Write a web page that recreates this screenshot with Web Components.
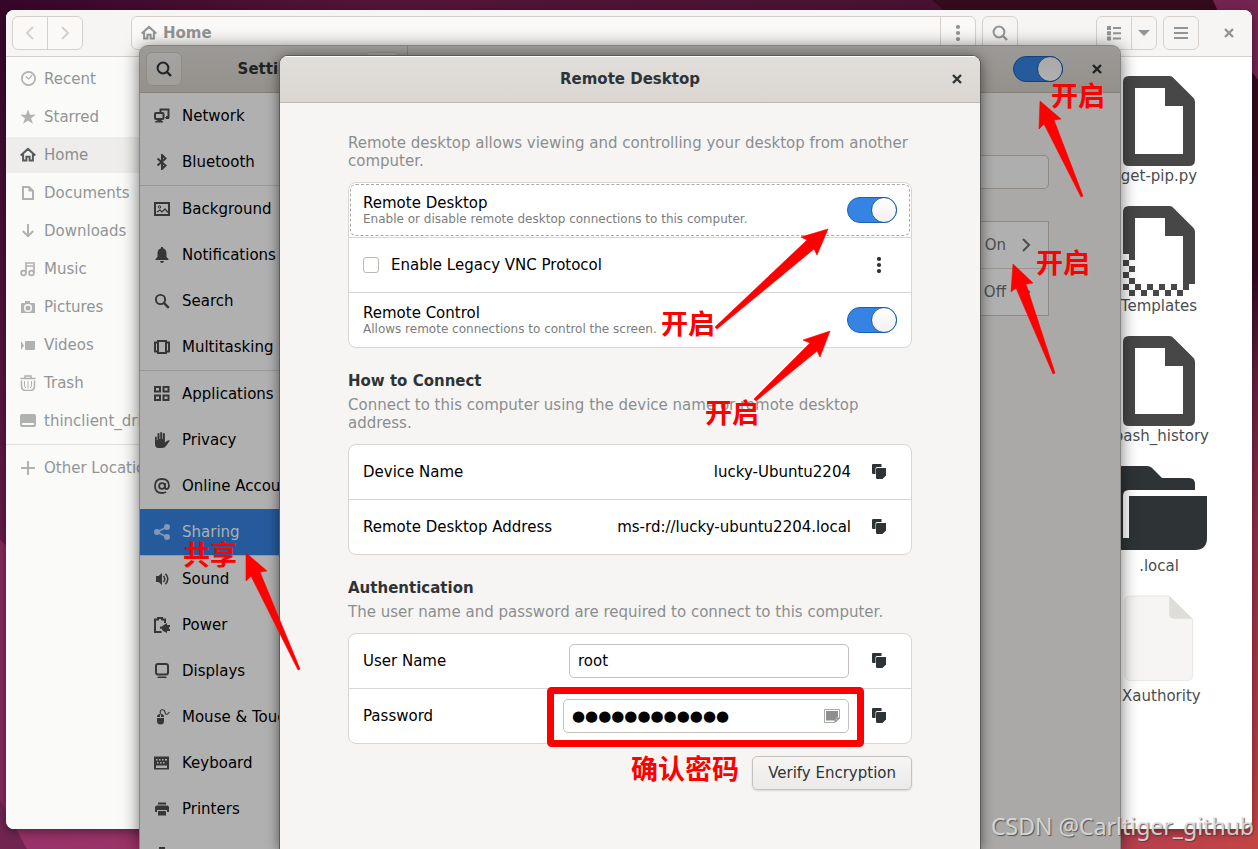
<!DOCTYPE html>
<html lang="en">
<head>
<meta charset="utf-8">
<title>Remote Desktop</title>
<style>
  html, body { margin: 0; height: 100%; }
  body { overflow: hidden; font: 15px/18px "DejaVu Sans", "Noto Sans CJK SC", sans-serif; color: #000; }
</style>
</head>
<body>
<desk-top></desk-top>
<script>
const ICONS = {
  back: '<path d="M11 2 5 8l6 6" fill="none" stroke="currentColor" stroke-width="2"/>',
  next: '<path d="m5 2 6 6-6 6" fill="none" stroke="currentColor" stroke-width="2"/>',
  home: '<path d="M.7 8.6 8 1.9l7.3 6.7M3.1 7v6.6h3.3V9.8h3.2v3.8h3.3V7" fill="none" stroke="currentColor" stroke-width="2"/>',
  search: '<circle cx="7" cy="7" r="5.4" fill="none" stroke="currentColor" stroke-width="2"/><path d="m11 11 4 4" stroke="currentColor" stroke-width="2.4"/>',
  find: '<circle cx="6.5" cy="6.5" r="4.6" fill="none" stroke="currentColor" stroke-width="1.9"/><path d="m9.8 9.8 5 5" stroke="currentColor" stroke-width="2.4"/>',
  dots: '<circle cx="8" cy="2" r="2.1"/><circle cx="8" cy="8" r="2.1"/><circle cx="8" cy="14" r="2.1"/>',
  list: '<path d="M1 1h4v4H1zM1 6.200h4v4H1zM1 11.400h4v4H1zM7 2h8v2H7zM7 7.200h8v2H7zM7 12.400h8v2H7z"/>',
  down: '<path d="M2 5h12l-6 6z"/>',
  menu: '<path d="M1 2h14v2H1zM1 7h14v2H1zM1 12h14v2H1z"/>',
  close: '<path d="m4 4 8 8m0-8-8 8" stroke="currentColor" stroke-width="2.4"/>',
  recent: '<circle cx="8.500" cy="7.500" r="6.600" fill="none" stroke="currentColor" stroke-width="1.700"/><path d="m6 5.500 2.700 2.500 3.500-4" fill="none" stroke="currentColor" stroke-width="1.200"/>',
  star: '<path d="m8 .3 1.900 5.400h5.800L11 9.200l1.900 5.600L8 11.500l-4.900 3.300L5 9.200.300 5.700h5.800z"/>',
  doc: '<path d="M3 2h6l4 4v8H3z" fill="none" stroke="currentColor" stroke-width="2"/><path d="M8.500 2v4.500H13"/>',
  arrow: '<path d="M8 1v12M2.800 8 8 13.200 13.200 8" fill="none" stroke="currentColor" stroke-width="2"/>',
  music: '<circle cx="3.500" cy="12" r="2.400" fill="none" stroke="currentColor" stroke-width="1.800"/><circle cx="11.500" cy="12" r="2.400" fill="none" stroke="currentColor" stroke-width="1.800"/><path d="M6 12V2h8v10M6 5h8" fill="none" stroke="currentColor" stroke-width="1.700"/>',
  camera: '<path fill-rule="evenodd" d="M5 2h5v2h4q1 0 1 1v9H1V5q0-1 1-1h3zm3 3a4 4 0 1 0 0 8 4 4 0 0 0 0-8zm0 1.500a2.500 2.500 0 1 1 0 5 2.500 2.500 0 0 1 0-5z"/><path fill-rule="evenodd" d="M8 5a4 4 0 1 0 0 8 4 4 0 0 0 0-8zm0 1.500a2.500 2.500 0 1 1 0 5 2.500 2.500 0 0 1 0-5z"/><circle cx="8" cy="9" r="3.300" fill="none" stroke="#fafaf9" stroke-width="1.400"/>',
  video: '<path d="M6 4h8q1 0 1 1v7q0 1-1 1H6q-1 0-1-1V5q0-1 1-1zM1 4l3 4.500L1 13z"/>',
  trash: '<path d="M.500 3.500h15M5 3V1h6v2M1.500 5.500v5q0 5 4 5h5q4 0 4-5v-5" fill="none" stroke="currentColor" stroke-width="1.500"/><path d="M4.500 6v4q0 2 1.500 3M8 6v7.500M11.500 6v4q0 2-1.500 3" fill="none" stroke="currentColor"/>',
  drive: '<path fill-rule="evenodd" d="M2 1h12q2 0 2 2v9q0 2-2 2H2q-2 0-2-2V3q0-2 2-2zm0 9v2h12v-2z"/>',
  plus: '<path d="M7 1h2v6h6v2H9v6H7V9H1V7h6z"/>',
  network: '<path d="M6.500 4V1.500h8V9H12" fill="none" stroke="currentColor" stroke-width="2"/><path d="M11 9h4v2h-3z"/><rect x="1" y="5" width="8.500" height="6" rx="1" fill="none" stroke="currentColor" stroke-width="2"/><path d="M4 11h3v1l2 1.500v1H1v-1L4 12z"/>',
  bluetooth: '<path d="m3.500 4.500 8 7L8 15V1l3.500 3.500-8 7" fill="none" stroke="currentColor" stroke-width="2"/>',
  background: '<rect x="1" y="2" width="14" height="12" fill="none" stroke="currentColor" stroke-width="2"/><circle cx="5.500" cy="6" r="1.200" fill="none" stroke="currentColor"/><path d="m3 11 3-2 2 2 3-3 3 3.500" fill="none" stroke="currentColor" stroke-width="1.200"/>',
  bell: '<path d="M7 0h2v1.200q3.500 1 3.500 5V10l2 2v1h-13v-1l2-2V6.200q0-4 3.500-5zM6 14h4q-.500 2-2 2t-2-2z"/>',
  multi: '<path d="M4 2h8v12H4zM3.500 3.500H1v9h2.500M12.500 3.500H15v9h-2.500" fill="none" stroke="currentColor" stroke-width="2"/>',
  apps: '<path d="M1 1h5v4.500H1zM9.500 1h5v4.500h-5zM1 9.500h5V14H1zM9.500 9.500h5V14h-5z" fill="none" stroke="currentColor" stroke-width="2"/>',
  hand: '<path d="M1 5.500q0-1 .900-1t.900 1V8h.700V2q0-1 1-1t1 1v5h.700V1q0-1 1-1t1 1v6h.700V2q0-1 1-1t1 1v8.500l2-1.500q1.500-1 3.100-.700l-3.600 5.200q-1.500 2.500-4.400 2.500H4.500Q1 16 1 12z"/>',
  at: '<circle cx="8" cy="8" r="2.900" fill="none" stroke="currentColor" stroke-width="1.800"/><path d="M11 5v4.500q0 1.500 1.700 1.500T15 8q0-7-7-7T1 8t7 7q2.500 0 4-1" fill="none" stroke="currentColor" stroke-width="1.800"/>',
  share: '<path d="M13 3 3 8l10 5" fill="none" stroke="currentColor" stroke-width="1.600"/><circle cx="3" cy="8" r="3"/><circle cx="13" cy="3" r="3"/><circle cx="13" cy="13" r="3"/>',
  sound: '<path d="M2 5h2.500L8 2v12l-3.500-3H2z"/><path d="M9.500 5q2.500 3 0 6M11.500 2.800q4.500 5.200 0 10.400" fill="none" stroke="currentColor" stroke-width="1.500"/>',
  power: '<path d="M7.500 15H1V2.500h3V1h4v1.500h3V6" fill="none" stroke="currentColor" stroke-width="2"/><path d="M10.500 7.500 13 6v2h3v2h-1v2h1v2h-3v2l-3-1.500L8 13v-1.200H6v-2.200h2z"/>',
  display: '<rect x="2" y="1" width="12" height="10.500" rx="2" fill="none" stroke="currentColor" stroke-width="2"/><path d="M4 13.500h8v.8l1 .2V15H3v-.5l1-.2z"/>',
  mouse: '<path d="M3 9h7v3q0 3.500-3.500 3.500T3 12zM3 8q0-3 3-3v3zM7 5q3 0 3 3H7z"/><path d="M6.500 5.500Q5.500 1 8 .800t3 2.400 2 2T15.500 3" fill="none" stroke="currentColor" stroke-width="1.100"/>',
  keyboard: '<path fill-rule="evenodd" d="M0 1.500h15v13H0zM2 4v1.500h1.500V4zm3 0v1.500h1.500V4zm3 0v1.500h1.500V4zm3 0v1.500h2V4zM3 7v1.500h1.500V7zm3 0v1.500h1.500V7zm3 0v1.500h1.500V7zM2 10.500V13h11v-2.500z"/>',
  printer: '<path d="M4 1.500h8v2H4zM3 4.500h10q2 0 2 2V11h-2V9H3v2H1V6.500q0-2 2-2zM4 10h8v4.500H4z"/>',
  media: '<path d="M5 0h6v4h2v12H3V4h2z"/>',
  copy: '<path d="M2 0h8.500v3H6Q4.500 3 4.500 4.500V10H2q-1 0-1-1V1q0-1 1-1z"/><path d="M6.200 4H15v7.500L11.500 15H6.200q-1.200 0-1.200-1.200V5.200Q5 4 6.200 4z"/>',
  note: '<path d="M.5 1.500h15V10l-4.500 4.500H.5z" fill="#fff" stroke="#a8a8a6"/><path d="M2 3h12v6.500l-2.500.5-.5 2.500H2z" fill="#8f8f8d"/><path d="m11 14 .5-3.500 4-.5z" fill="#ccc" stroke="#8a8a88"/>',
  filedoc: '<path fill-rule="evenodd" d="M3 .5h6.700q.500 0 .800.400L13.600 4q.400.300.400.800v9.700q0 1-1 1H3q-1 0-1-1v-13q0-1 1-1zm1 2v11h8v-8H9v-3z"/>',
  template: '<path d="M3 .5h6.700q.500 0 .800.400L13.600 4q.400.300.400.800v8.700h-1v1h-1v-9H9v-3H4v7H3v-1H2v-7q0-1 1-1zM2 9.500h1v1H2zM3 10.500h1v1H3zM2 11.500h1v1H2zM3 12.500h1v1H3zM2 13.500h1v1H2zM4 13.500h1v1H4zM6 13.500h1v1H6zM8 13.500h1v1H8zM10 13.500h1v1h-1zM3 14.500h1v1H3zM5 14.500h1v1H5zM7 14.500h1v1H7zM9 14.500h1v1H9zM11 14.500h1v1h-1z"/>',
  folder: '<path d="M2 .5h4q.500 0 .800.300L8.500 2.500H13q1 0 1 1v1H3q-1 0-1 1v7h1v-7h13v7q0 2-2 2H2q-2 0-2-2v-10q0-2 2-2z" fill="#2e3436"/>',
  blank: '<path d="M3.300.5h6.400l3.900 3.900v9.200q0 1-1 1H3.300q-1 0-1-1V1.500q0-1 1-1z" fill="#f6f5f4" stroke="#e4e4e2" stroke-width=".15"/><path d="M9.700.5l3.900 3.800h-3q-.900 0-.900-.900z" fill="#deddda"/>'
};

/* Base class: puts a style and a markup template into an open shadow root. */
class Part extends HTMLElement {
  constructor() {
    super();
    this.attachShadow({ mode: 'open' });
  }
  connectedCallback() {
    if (this.shadowRoot.firstChild) return;
    const t = document.createElement('template');
    t.innerHTML = `<style>*,*::before,*::after{box-sizing:border-box}${this.css()}</style>${this.html()}`;
    this.shadowRoot.append(t.content.cloneNode(true));
  }
  attr(name, fallback = '') { return this.getAttribute(name) ?? fallback; }
}
const define = (name, css, html) => customElements.define(name, class extends Part {
  css() { return css; }
  html() { return html(this); }
});

define('sym-icon', `
  :host { display: block; flex: none; width: var(--icon, 16px); height: var(--icon, 16px); }
  svg { display: block; width: 100%; height: 100%; fill: currentColor; }`,
  e => `<svg viewBox="0 0 16 16" aria-hidden="true">${ICONS[e.attr('name')]}</svg>`);

define('icon-button', `
  :host { display: flex; flex: none; width: 34px; height: 34px; }
  button { flex: 1; display: flex; align-items: center; justify-content: center; padding: 0;
    border: 0; background: none; color: inherit; }`,
  e => `<button type="button" aria-label="${e.attr('label')}"><sym-icon name="${e.attr('icon')}"></sym-icon></button>`);

define('toggle-switch', `
  :host { display: block; flex: none; --on: #3584e4; --edge: #1a5fb4; --knob: #fff; --knob2: #f2f0ef; }
  input { appearance: none; display: flex; justify-content: flex-end; width: 50px; height: 26px; margin: 0;
    border: 1px solid var(--edge); border-radius: 13px; background: var(--on); }
  input::before { content: ""; width: 26px; height: 26px; margin: -1px; border: 1px solid var(--edge);
    border-radius: 50%; background: linear-gradient(var(--knob), var(--knob2)); }
  :host([dim]) { --on: #255b9d; --edge: #12417c; --knob: #aaa9a8; --knob2: #b0b0b0; }`,
  e => `<input type="checkbox" role="switch" checked aria-label="${e.attr('label')}">`);

/* Files window */
define('place-item', `
  :host { display: block; height: 38px; padding: 1px 0; }
  a { display: flex; align-items: center; gap: 8px; height: 36px; padding-left: 14px; color: #929595;
    text-decoration: none; white-space: nowrap; }
  sym-icon { color: #b0b1b1; }
  :host([current]) a { background: #eeedec; color: #8b8e8f; }
  :host([current]) sym-icon { color: #565a5c; }`,
  e => `<a href="#"><sym-icon name="${e.attr('icon')}"></sym-icon><slot></slot></a>`);

define('file-item', `
  :host { display: flex; flex-direction: column; align-items: center; width: 140px; height: 130px; color: #474747; --icon: 96px; }
  span { margin-top: -2px; color: #4a4d4f; white-space: nowrap; }`,
  e => `<sym-icon name="${e.attr('icon')}"></sym-icon><span><slot></slot></span>`);

define('files-window', `
  :host { display: flex; flex-direction: column; border-radius: 8px; background: #fff; overflow: hidden;
    box-shadow: 0 3px 10px rgba(0,0,0,.4); color: #929595; }
  header { display: flex; align-items: flex-start; height: 47px; padding: 6px; background: #f6f5f4;
    border-bottom: 1px solid #d5d0cc; }
  .group { display: flex; height: 34px; border: 1px solid #d5d0cc; border-radius: 6px; }
  .group > * + * { width: 35px; border-left: 1px solid #d5d0cc; }
  .group icon-button { height: 32px; }
  .nav { margin-right: 48px; color: #d5d0cc; background: #faf9f8; }
  .path { flex: 1; margin-right: 6px; background: #faf9f8; }
  .crumb { flex: 1; display: flex; align-items: center; gap: 6px; padding-left: 9px; font-weight: bold; }
  .view { margin: 0 6px 0 78px; }
  .view icon-button + icon-button { width: 25px; }
  .close { margin-left: 13px; }
  .body { flex: 1; display: flex; min-height: 0; }
  nav { width: 240px; background: #fafaf9; padding-top: 3px; }
  hr { margin: 4px 0; border: 0; border-top: 1px solid #dfdcd9; }
  main { flex: 1; display: flex; flex-direction: column; align-items: flex-end; padding: 16px 23px 0 0; }`,
  () => `<header>
    <div class="group nav"><icon-button icon="back" label="Back"></icon-button><icon-button icon="next" label="Forward"></icon-button></div>
    <div class="group path"><span class="crumb"><sym-icon name="home"></sym-icon>Home</span><icon-button icon="dots" label="Folder menu"></icon-button></div>
    <div class="group"><icon-button icon="search" label="Search"></icon-button></div>
    <div class="group view"><icon-button icon="list" label="List view"></icon-button><icon-button icon="down" label="View options"></icon-button></div>
    <div class="group"><icon-button icon="menu" label="Menu"></icon-button></div>
    <icon-button class="close" icon="close" label="Close"></icon-button>
  </header>
  <div class="body"><nav>
    <place-item icon="recent">Recent</place-item><place-item icon="star">Starred</place-item>
    <place-item icon="home" current>Home</place-item><place-item icon="doc">Documents</place-item>
    <place-item icon="arrow">Downloads</place-item><place-item icon="music">Music</place-item>
    <place-item icon="camera">Pictures</place-item><place-item icon="video">Videos</place-item>
    <place-item icon="trash">Trash</place-item><place-item icon="drive">thinclient_drives</place-item>
    <hr><place-item icon="plus">Other Locations</place-item>
  </nav><main>
    <file-item icon="filedoc">get-pip.py</file-item><file-item icon="template">Templates</file-item>
    <file-item icon="filedoc">.bash_history</file-item><file-item icon="folder">.local</file-item>
    <file-item icon="blank">.Xauthority</file-item>
  </main></div>`);

/* Settings window */
define('panel-item', `
  :host { display: block; }
  a { display: flex; align-items: center; gap: 12px; height: 46px; padding-left: 14px; color: #000;
    text-decoration: none; white-space: nowrap; }
  sym-icon { color: #363636; }
  :host([current]) a { background: #255b9d; color: #b0b0b0; }
  :host([current]) sym-icon { color: #8099b6; }`,
  e => `<a href="#"><sym-icon name="${e.attr('icon')}"></sym-icon><slot></slot></a>`);

define('settings-window', `
  :host { display: flex; flex-direction: column; border-radius: 8px 8px 0 0; background: #aaa9a8; overflow: hidden;
    box-shadow: 0 0 0 1px #858481, 0 2px 18px rgba(0,0,0,.6); }
  header { display: flex; height: 47px; background: linear-gradient(#9c9a97, #94908c); border-bottom: 1px solid #84807a; color: #202426; }
  .left { flex: none; width: 268px; display: flex; align-items: center; justify-content: space-between; padding: 0 7px 0 6px;
    border-right: 1px solid #85827e; font-weight: bold; }
  .left icon-button { width: 36px; border: 1px solid #8e8b87; border-radius: 6px; background: linear-gradient(#a5a4a2, #a09d9a); }
  .right { flex: 1; display: flex; align-items: center; justify-content: flex-end; gap: 17px; padding-right: 6px; }
  .body { flex: 1; display: flex; min-height: 0; }
  nav { flex: none; width: 268px; background: #b0b0b0; border-right: 1px solid #95928f; overflow: hidden; }
  hr { margin: 0; border: 0; border-top: 1px solid #999; }
  main { flex: 1; padding: 62px 71px 0; color: #4c4d4e; }
  input { display: block; width: 100%; height: 34px; border: 1px solid #8d8984; border-radius: 5px; background: #aeaeae; padding: 0 8px; font: inherit; }
  ul { margin: 32px 0 0; padding: 0; list-style: none; border: 1px solid #8d8984; background: #b0b0b0; }
  li { display: flex; align-items: center; justify-content: flex-end; gap: 12px; height: 46px; padding-right: 14px; }
  li + li { border-top: 1px solid #999591; height: 47px; }`,
  () => `<header><div class="left"><icon-button icon="search" label="Search"></icon-button>Settings<icon-button icon="menu" label="Menu"></icon-button></div>
    <div class="right"><toggle-switch dim label="Sharing"></toggle-switch><icon-button icon="close" label="Close"></icon-button></div></header>
  <div class="body"><nav>
    <panel-item icon="network">Network</panel-item><panel-item icon="bluetooth">Bluetooth</panel-item><hr>
    <panel-item icon="background">Background</panel-item><panel-item icon="bell">Notifications</panel-item>
    <panel-item icon="find">Search</panel-item><panel-item icon="multi">Multitasking</panel-item><hr>
    <panel-item icon="apps">Applications</panel-item><panel-item icon="hand">Privacy</panel-item>
    <panel-item icon="at">Online Accounts</panel-item><panel-item icon="share" current>Sharing</panel-item><hr>
    <panel-item icon="sound">Sound</panel-item><panel-item icon="power">Power</panel-item>
    <panel-item icon="display">Displays</panel-item><panel-item icon="mouse">Mouse &amp; Touchpad</panel-item>
    <panel-item icon="keyboard">Keyboard</panel-item><panel-item icon="printer">Printers</panel-item>
    <panel-item icon="media"></panel-item>
  </nav><main><input type="text" aria-label="Device name">
    <ul><li>On <sym-icon name="next"></sym-icon></li><li>Off <sym-icon name="next"></sym-icon></li></ul>
  </main></div>`);

/* Remote Desktop dialog */
define('option-card', `
  :host { display: block; border: 1px solid #d9d6d2; border-radius: 8px; background: #fff; }`,
  () => `<slot></slot>`);

define('option-row', `
  :host { display: flex; flex-direction: column; }
  .row { position: relative; display: flex; align-items: center; gap: 12px; height: 54px; padding: 0 14px; }
  .text { flex: 1; display: flex; flex-direction: column; }
  small { font-size: 12px; line-height: 15px; color: #7c7c7c; }
  :host([focused]) .row::after { content: ""; position: absolute; inset: 1px; border: 1px dashed #a9a9a9; border-radius: 6px; pointer-events: none; }`,
  e => `<div class="row"><div class="text"><slot></slot>${e.attr('note') ? `<small>${e.attr('note')}</small>` : ''}</div><slot name="end"></slot></div>`);

define('section-text', `
  :host { display: block; color: #8b8e8f; }
  h2 { margin: 0 0 6px; font: bold 15px/18px "DejaVu Sans", sans-serif; color: #2e3436; }
  p { margin: 0; }`,
  e => `${e.attr('heading') ? `<h2>${e.attr('heading')}</h2>` : ''}<p><slot></slot></p>`);

define('remote-dialog', `
  :host { display: block; border-radius: 8px 8px 0 0; background: #f6f5f4; overflow: hidden;
    box-shadow: 0 0 0 1px #5b5a58, 0 2px 14px rgba(0,0,0,.6); }
  header { display: flex; align-items: center; height: 47px; padding: 0 6px 0 40px; border-bottom: 1px solid #bfb8b1;
    background: linear-gradient(#e1dedb, #dad6d2); color: #2e3436; box-shadow: inset 0 1px #fff; }
  h1 { flex: 1; margin: 0; font: bold 15px/18px "DejaVu Sans", sans-serif; text-align: center; }
  main { padding: 31px 68px; }
  option-card { margin: 12px 0 24px; }
  option-row + option-row { border-top: 1px solid #d9d6d2; }
  .tight { margin-bottom: 12px; }
  .end { display: flex; align-items: center; gap: 12px; color: #2e3436; }
  .value { gap: 10px; }
  .end icon-button, .dots { width: 36px; color: #2e3436; }
  .check { display: flex; align-items: center; gap: 12px; }
  .check input { appearance: none; width: 16px; height: 16px; margin: 0; border: 1px solid #bfb8b1; border-radius: 3px; background: #fff; }
  .field { display: flex; align-items: center; width: 280px; height: 34px; padding: 0 8px; border: 1px solid #c6c1bc; border-radius: 5px; background: #fff; }
  .field.wide { width: 286px; }
  .field input { flex: 1; min-width: 0; padding: 0; border: 0; outline: 0; background: none; font: inherit; color: #000; }
  .out { color: #000; }
  .foot { display: flex; justify-content: flex-end; }
  .foot button { height: 34px; padding: 0 15px; border: 1px solid #c6c1bc; border-radius: 5px; font: inherit; color: #2e3436;
    background: linear-gradient(#f6f5f4, #eceae8); box-shadow: 0 1px 2px rgba(0,0,0,.12); }`,
  () => `<header><h1>Remote Desktop</h1><icon-button icon="close" label="Close"></icon-button></header>
  <main>
    <section-text>Remote desktop allows viewing and controlling your desktop from another computer.</section-text>
    <option-card>
      <option-row focused note="Enable or disable remote desktop connections to this computer.">Remote Desktop<toggle-switch slot="end" label="Remote Desktop"></toggle-switch></option-row>
      <option-row><label class="check"><input type="checkbox">Enable Legacy VNC Protocol</label><icon-button class="dots" slot="end" icon="dots" label="VNC options"></icon-button></option-row>
      <option-row note="Allows remote connections to control the screen.">Remote Control<toggle-switch slot="end" label="Remote Control"></toggle-switch></option-row>
    </option-card>
    <section-text heading="How to Connect">Connect to this computer using the device name or remote desktop address.</section-text>
    <option-card>
      <option-row>Device Name<div class="end value" slot="end"><span class="out">lucky-Ubuntu2204</span><icon-button icon="copy" label="Copy device name"></icon-button></div></option-row>
      <option-row>Remote Desktop Address<div class="end value" slot="end"><span class="out">ms-rd://lucky-ubuntu2204.local</span><icon-button icon="copy" label="Copy address"></icon-button></div></option-row>
    </option-card>
    <section-text heading="Authentication">The user name and password are required to connect to this computer.</section-text>
    <option-card class="tight">
      <option-row><label for="user">User Name</label><div class="end" slot="end"><span class="field"><input id="user" type="text" value="root"></span><icon-button icon="copy" label="Copy user name"></icon-button></div></option-row>
      <option-row><label for="pass">Password</label><div class="end" slot="end"><span class="field wide"><input id="pass" type="text" value="●●●●●●●●●●●●"><sym-icon name="note"></sym-icon></span><icon-button icon="copy" label="Copy password"></icon-button></div></option-row>
    </option-card>
    <div class="foot"><button type="button">Verify Encryption</button></div>
  </main>`);

/* Hand-drawn marks on a free canvas above the windows */
define('mark-note', `
  :host { position: absolute; font: bold 27px/28px "Noto Sans CJK SC", sans-serif; color: #f00; white-space: nowrap; }`,
  () => `<slot></slot>`);

define('mark-layer', `
  :host { position: absolute; inset: 0; pointer-events: none; }
  svg { position: absolute; left: 0; top: 0; width: 1px; height: 1px; overflow: visible; }`,
  () => `<svg aria-hidden="true"><g fill="#f00" stroke="#f00" stroke-width=".6">
    <path d="M246 553l21 18-7 1 40 97-2 1-47-94-5 5z"/>
    <path d="M1040 101l21 18-7 1 29 76-2 1-37-73-5 5z"/>
    <path d="M1013 264l20 19-7 1 29 89-2 1-37-86-5 4z"/>
    <path d="M828 229l-27 8 6 3-92 87 2 2 97-80 3 6z"/>
    <path d="M830 331l-27 9 7 3-56 56 2 2 61-50 3 6z"/></g>
    <rect x="550.500" y="690.500" width="310" height="53" rx="1" fill="none" stroke="#f00" stroke-width="7" stroke-linejoin="round"/></svg>
    <slot></slot>`);

define('desk-top', `
  :host { position: relative; display: block; height: 100%; overflow: hidden; }
  .wall { position: absolute; inset: 0; width: 100%; height: 100%; }
  files-window { position: absolute; inset: 10px 6px 20px; }
  settings-window { position: absolute; inset: 46px 138px 0 140px; }
  remote-dialog { position: absolute; inset: 56px 278px 0 280px; }
  .water { position: absolute; right: 4px; bottom: 8px; font: 23px/30px "Noto Sans", sans-serif; color: rgba(225,225,225,.9);
    text-shadow: 1px 1px 1px rgba(60,60,60,.8); }`,
  () => `<svg class="wall" viewBox="0 0 1258 849" preserveAspectRatio="none" aria-hidden="true">
    <defs>
      <linearGradient id="t"><stop offset="0" stop-color="#36062a"/><stop offset=".3" stop-color="#531537"/><stop offset="1" stop-color="#40112d"/></linearGradient>
      <linearGradient id="l" x2="0" y2="1"><stop offset="0" stop-color="#36062a"/><stop offset=".65" stop-color="#651c47"/><stop offset="1" stop-color="#65204a"/></linearGradient>
      <linearGradient id="r" x2="0" y2="1"><stop offset="0" stop-color="#340a1c"/><stop offset=".32" stop-color="#340a20"/><stop offset=".45" stop-color="#67203f"/><stop offset=".6" stop-color="#8c2c4a"/><stop offset="1" stop-color="#c34444"/></linearGradient>
      <linearGradient id="b"><stop offset="0" stop-color="#973269"/><stop offset=".8" stop-color="#a83b55"/><stop offset="1" stop-color="#c34444"/></linearGradient>
    </defs>
    <path d="M0 0h1258v849H0z" fill="url(#t)"/><path d="M0 0h10v849H0z" fill="url(#l)"/>
    <path d="M932 0h326v849h-40V12H946z" fill="url(#r)"/>
    <path d="M1213 0h45v80q-24-30-45-80z" fill="#732450"/>
    <path d="M0 540q4 3 8 8v301H0z" fill="#862a5b"/>
    <path d="M0 820h1258v29H0z" fill="url(#b)"/><path d="M0 800l27 49H0z" fill="#702551"/>
  </svg>
  <files-window></files-window><settings-window></settings-window><remote-dialog></remote-dialog>
  <mark-layer>
    <mark-note style="left:1051px;top:81px">开启</mark-note>
    <mark-note style="left:1036px;top:248px">开启</mark-note>
    <mark-note style="left:661px;top:309px">开启</mark-note>
    <mark-note style="left:705px;top:398px">开启</mark-note>
    <mark-note style="left:183px;top:540px">共享</mark-note>
    <mark-note style="left:631px;top:754px">确认密码</mark-note>
  </mark-layer>
  <div class="water">CSDN @Carltiger_github</div>`);
</script>
</body>
</html>
